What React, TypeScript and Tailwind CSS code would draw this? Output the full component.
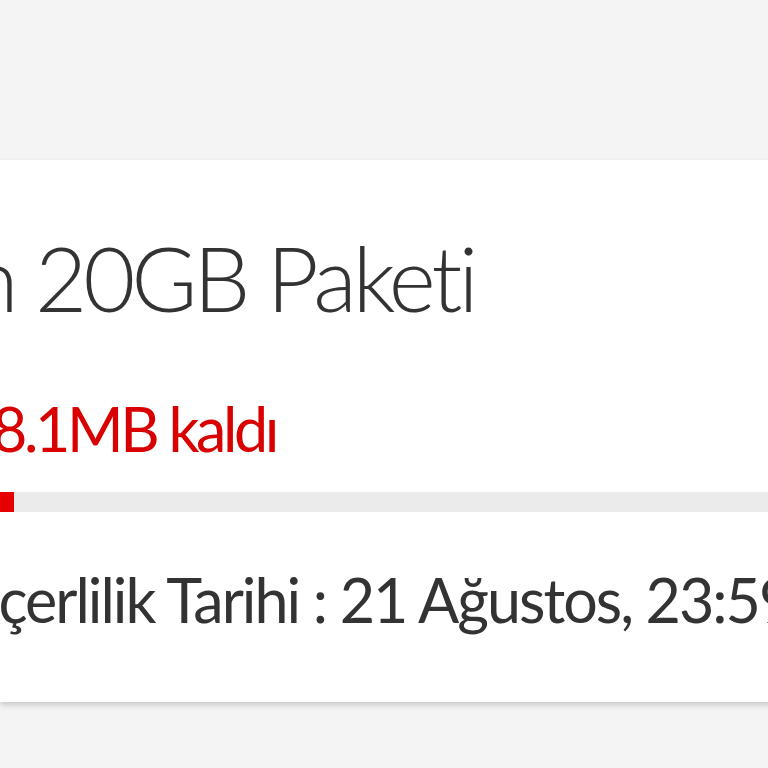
export default function App() {
  const usedPct = 1.7;

  return (
    <div
      className="w-[768px] h-[768px] overflow-hidden bg-[#f4f4f4] pt-[160px]"
      style={{ fontFamily: 'Lato, "Open Sans", sans-serif' }}
    >
      {/* Package card */}
      <div className="h-[542px] w-[800px] bg-white shadow-[0_3px_6px_rgba(0,0,0,0.18)] overflow-hidden">
        <div className="pt-[72px] -ml-[31px] whitespace-nowrap text-[90px] leading-none font-light tracking-[-4px] text-[#333333]">
          n 20GB Paketi
        </div>

        <div className="mt-[76px] -ml-[8px] whitespace-nowrap text-[61px] leading-none tracking-[-3.4px] text-[#d80000]">
          8.1MB kaldı
        </div>

        <div className="mt-[33px] h-[20px] bg-[#ebebeb]">
          <div className="h-full bg-[#e60000]" style={{ width: `${usedPct}%` }} />
        </div>

        <div className="mt-[57px] -ml-[74px] whitespace-nowrap text-[61px] leading-none tracking-[-2px] text-[#333333]">
          Geçerlilik Tarihi : 21 Ağustos, 23:59
        </div>
      </div>
    </div>
  );
}
